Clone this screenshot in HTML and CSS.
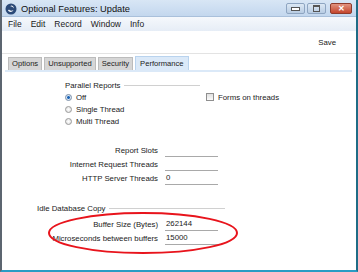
FILE: index.html
```html
<!DOCTYPE html>
<html lang="en">
<head>
  <meta charset="UTF-8">
  <title>Optional Features: Update</title>
  <link rel="stylesheet" href="styles.css">
</head>
<body>
<div class="window">
  <div class="titlebar">
    <svg class="appicon" width="12" height="12" viewBox="0 0 12 12">
      <circle cx="6" cy="6" r="5.5" fill="#2c4a78"/>
      <path d="M3 7.5 C4 9.5 7.5 9.5 8.5 7 C7 8 5 8 4 6.5 Z" fill="#fff"/>
      <path d="M6 2.5 C8 2.5 9 4 8.8 5.5 C8 4 7 3.5 5.5 3.6 Z" fill="#fff"/>
    </svg>
    <span class="title">Optional Features: Update</span>
    <div class="controls">
      <span class="ctl"><i class="min"></i></span>
      <span class="ctl"><i class="max"></i></span>
      <span class="ctl close">&#x2715;</span>
    </div>
  </div>
  <div class="menubar">
    <span>File</span><span>Edit</span><span>Record</span><span>Window</span><span>Info</span>
  </div>
  <div class="toolbar"><span class="save">Save</span></div>
  <div class="tabs">
    <span class="tab">Options</span>
    <span class="tab">Unsupported</span>
    <span class="tab">Security</span>
    <span class="tab active">Performance</span>
  </div>
  <div class="panel">
    <div class="parallel">
      <div class="group">
        <div class="legend"><span>Parallel Reports</span><i class="rule"></i></div>
        <label class="radio"><span class="dot on"></span>Off</label>
        <label class="radio"><span class="dot"></span>Single Thread</label>
        <label class="radio"><span class="dot"></span>Multi Thread</label>
      </div>
      <label class="check"><span class="box"></span>Forms on threads</label>
    </div>

    <div class="fields">
      <span class="lbl">Report Slots</span><span class="fld"></span>
      <span class="lbl">Internet Request Threads</span><span class="fld"></span>
      <span class="lbl">HTTP Server Threads</span><span class="fld">0</span>
    </div>

    <div class="legend idle"><span>Idle Database Copy</span><i class="rule"></i></div>
    <div class="fields buffers">
      <span class="lbl">Buffer Size (Bytes)</span><span class="fld">262144</span>
      <span class="lbl">Microseconds between buffers</span><span class="fld">15000</span>
    </div>

    <svg class="mark" width="200" height="46" viewBox="0 0 200 46">
      <ellipse cx="100" cy="23" rx="94" ry="20" fill="none" stroke="#e8141c" stroke-width="2"/>
    </svg>
  </div>
</div>
</body>
</html>
```

FILE: styles.css
```css
body {
  margin: 0;
  font-family: 'Liberation Sans', Arial, sans-serif;
  font-size: 7.8px;
  color: #1a1a1a;
  background: #fff;
}
.window {
  width: 358px;
  height: 272px;
  box-sizing: border-box;
  border-left: 2px solid #5c6570;
  border-right: 2px solid #1f6c86;
  border-bottom: 2px solid #2a9cc4;
  background: #fff;
  display: flex;
  flex-direction: column;
  position: relative;
  overflow: hidden;
}
.titlebar {
  height: 17px;
  display: flex;
  align-items: center;
  padding: 1px 4px 0 3px;
  box-sizing: border-box;
  background: linear-gradient(#d8e6f5, #c3d7ee);
  border-bottom: 1px solid #a9c0db;
}
.appicon {
  margin-right: 4px;
}
.title {
  font-size: 9.3px;
  color: #111;
}
.controls {
  margin-left: auto;
  display: flex;
  gap: 2px;
}
.ctl {
  width: 19px;
  height: 11px;
  box-sizing: border-box;
  border: 1px solid #8ea5c1;
  border-radius: 2px;
  background: linear-gradient(#dce8f4, #b8cce3);
  display: flex;
  align-items: center;
  justify-content: center;
}
.ctl .min {
  width: 7px;
  height: 2px;
  border: 1px solid #555;
  background: #fff;
}
.ctl .max {
  width: 5px;
  height: 4px;
  border: 1px solid #555;
  border-top-width: 2px;
}
.ctl.close {
  width: 22px;
  margin-left: 2px;
  background: linear-gradient(#e2937f, #c4452d);
  border-color: #8e3b2c;
  color: #fff;
  font-size: 8px;
  font-weight: bold;
}
.menubar {
  height: 14px;
  display: flex;
  align-items: center;
  gap: 9px;
  padding-left: 6px;
  font-size: 8.5px;
  background: linear-gradient(#f5f8fc, #e6edf6);
}
.toolbar {
  height: 22px;
  display: flex;
  align-items: center;
  justify-content: flex-end;
  padding-right: 20px;
  border-bottom: 1px solid #e3e3e3;
  background: #fff;
}
.tabs {
  display: flex;
  gap: 2px;
  padding: 3px 0 0 6px;
  height: 13px;
  font-size: 7.6px;
}
.tab {
  padding: 0 3px;
  line-height: 12px;
  background: #d6d6d6;
  border: 1px solid #bcbcbc;
  border-bottom: none;
  color: #222;
}
.tab.active {
  background: #dbe9f8;
  border-color: #b9d3ee;
  padding: 0 4px;
  margin-top: -1px;
  line-height: 13px;
}
.panel {
  flex: 1;
  margin: 0 4px 0 3px;
  border-top: 2px solid #dbe9f8;
  position: relative;
}
.parallel {
  display: flex;
  padding: 7px 0 0 60px;
}
.group {
  width: 135px;
}
.legend {
  display: flex;
  align-items: center;
  gap: 4px;
  height: 12px;
}
.rule {
  flex: 1;
  height: 1px;
  background: #d0d0d0;
}
.radio, .check {
  display: flex;
  align-items: center;
  gap: 4px;
  height: 12px;
}
.dot {
  width: 7px;
  height: 7px;
  box-sizing: border-box;
  border-radius: 50%;
  border: 1px solid #9a9a9a;
  background: radial-gradient(#fff, #dcdcdc);
}
.dot.on {
  background: radial-gradient(#1b63b5 35%, #d8e6f4 45%);
  border-color: #7a8ea8;
}
.check {
  margin-top: 12px;
  margin-left: 6px;
}
.box {
  width: 8px;
  height: 8px;
  box-sizing: border-box;
  border: 1px solid #8f8f8f;
  background: linear-gradient(#e0e0e0, #fafafa);
}
.fields {
  display: grid;
  grid-template-columns: 120px 53px;
  column-gap: 7px;
  grid-auto-rows: 14px;
  margin: 16px 0 0 33px;
}
.lbl {
  justify-self: end;
  align-self: center;
}
.fld {
  border-bottom: 1px solid #a9a9a9;
  line-height: 12px;
  height: 12px;
  padding-left: 1px;
  align-self: center;
}
.idle {
  margin: 17px 0 0 32px;
  width: 188px;
}
.buffers {
  margin-top: 3px;
}
.mark {
  position: absolute;
  left: 38px;
  top: 138px;
}
```
